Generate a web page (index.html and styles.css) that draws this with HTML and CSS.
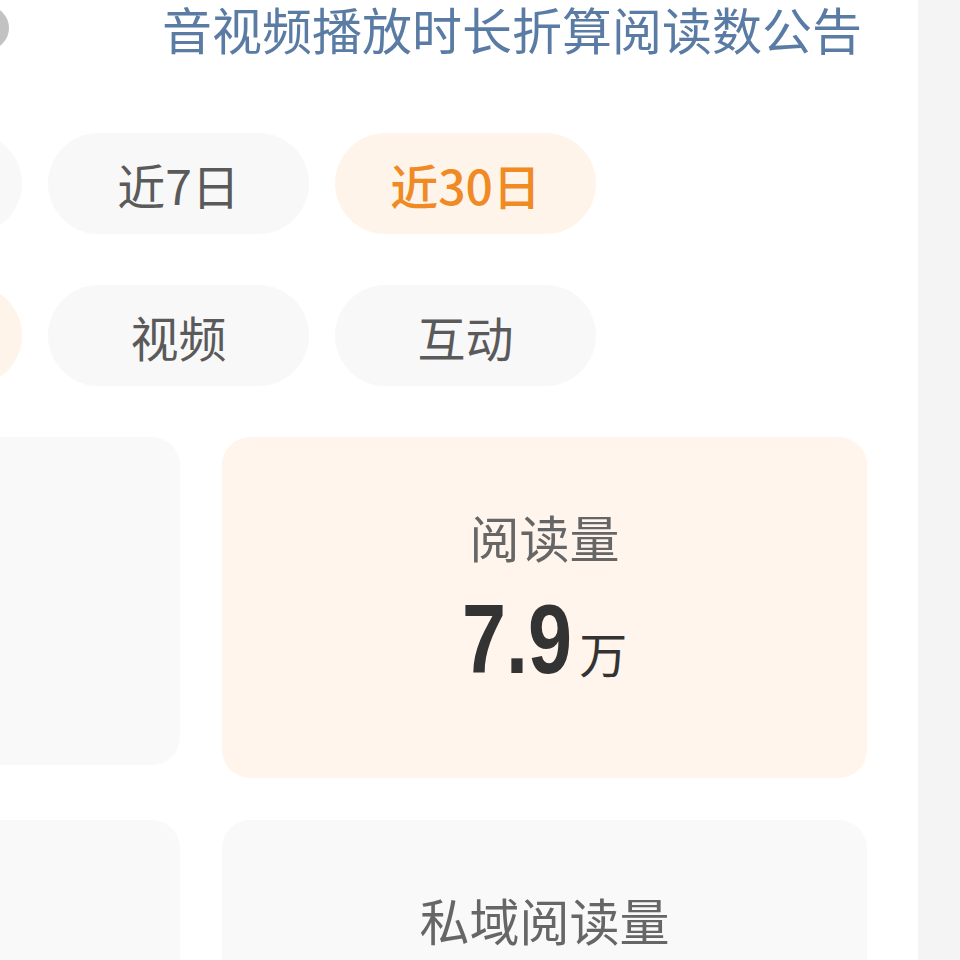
FILE: index.html
```html
<!DOCTYPE html>
<html lang="zh-CN">
<head>
    <meta charset="UTF-8">
    <meta name="viewport" content="width=device-width, initial-scale=1.0">
    <title>数据概览</title>
    <link rel="stylesheet" href="styles.css">
</head>
<body>

    <div class="screen">
        <div class="panel">
            <div class="header">
                <span class="avatar"></span>
                <a class="notice" href="#">音视频播放时长折算阅读数公告</a>
            </div>

            <div class="tabs">
                <div class="tab-row">
                    <span class="pill">昨日</span>
                    <span class="pill">近7日</span>
                    <span class="pill active">近30日</span>
                </div>
                <div class="tab-row">
                    <span class="pill active">全部</span>
                    <span class="pill">视频</span>
                    <span class="pill">互动</span>
                </div>
            </div>

            <div class="cards">
                <div class="card short">
                    <div class="card-label">曝光量</div>
                    <div class="card-value"><span class="num">12.4</span><span class="unit">万</span></div>
                </div>
                <div class="card highlight">
                    <div class="card-label">阅读量</div>
                    <div class="card-value"><span class="num">7.9</span><span class="unit">万</span></div>
                </div>
                <div class="card">
                    <div class="card-label">公域阅读量</div>
                </div>
                <div class="card">
                    <div class="card-label">私域阅读量</div>
                </div>
            </div>
        </div>
        <div class="side"></div>
    </div>

</body>
</html>
```

FILE: styles.css
```css
body {
    margin: 0;
    padding: 0;
    font-family: "Noto Sans CJK SC", "Noto Sans", sans-serif;
    background-color: #f4f4f4;
}

.screen {
    display: flex;
    height: 960px;
    overflow: hidden;
}

.panel {
    flex: none;
    width: 918px;
    background-color: #fff;
    overflow: hidden;
}

.side {
    flex: 1;
    background-color: #f4f4f4;
}

/* header: avatar on the left, notice link on the right */
.header {
    display: flex;
    justify-content: space-between;
    align-items: center;
    height: 56px;
}

.avatar {
    width: 44px;
    height: 44px;
    margin-left: -35px;
    border-radius: 50%;
    background-color: #c2c2c2;
}

.notice {
    margin-right: 56px;
    font-size: 50px;
    line-height: 56px;
    color: #5a7ca4;
    text-decoration: none;
}

/* period / type filters */
.tabs {
    display: flex;
    flex-direction: column;
    gap: 51px;
    margin-top: 77px;
}

.tab-row {
    display: grid;
    grid-template-columns: repeat(3, 261px);
    gap: 26px;
    margin-left: -239px;
}

.pill {
    display: flex;
    justify-content: center;
    align-items: center;
    height: 101px;
    border-radius: 51px;
    background-color: #f8f8f8;
    font-size: 48px;
    color: #5a5a5a;
}

.pill.active {
    background-color: #fff4e9;
    color: #ef8a24;
    font-weight: 500;
}

/* stat cards */
.cards {
    display: grid;
    grid-template-columns: 645px 645px;
    column-gap: 42px;
    row-gap: 42px;
    align-items: start;
    margin-top: 51px;
    margin-left: -465px;
}

.card {
    display: flex;
    flex-direction: column;
    align-items: center;
    height: 341px;
    padding-top: 69px;
    box-sizing: border-box;
    border-radius: 28px;
    background-color: #f9f9f9;
}

.card.short {
    height: 328px;
}

.card.highlight {
    background-color: #fff5ec;
}

.card-label {
    font-size: 50px;
    line-height: 60px;
    color: #666;
}

.card-value {
    display: flex;
    align-items: baseline;
    margin-top: 23px;
    color: #333;
}

/* narrow figures: the digits are squeezed horizontally */
.card-value .num {
    display: inline-block;
    margin-right: -28px;
    font-family: "Liberation Sans", Arial, sans-serif;
    font-weight: bold;
    font-size: 99px;
    line-height: 99px;
    transform: scaleX(0.8);
    transform-origin: left center;
}

.card-value .unit {
    margin-left: 8px;
    font-size: 48px;
}
```
